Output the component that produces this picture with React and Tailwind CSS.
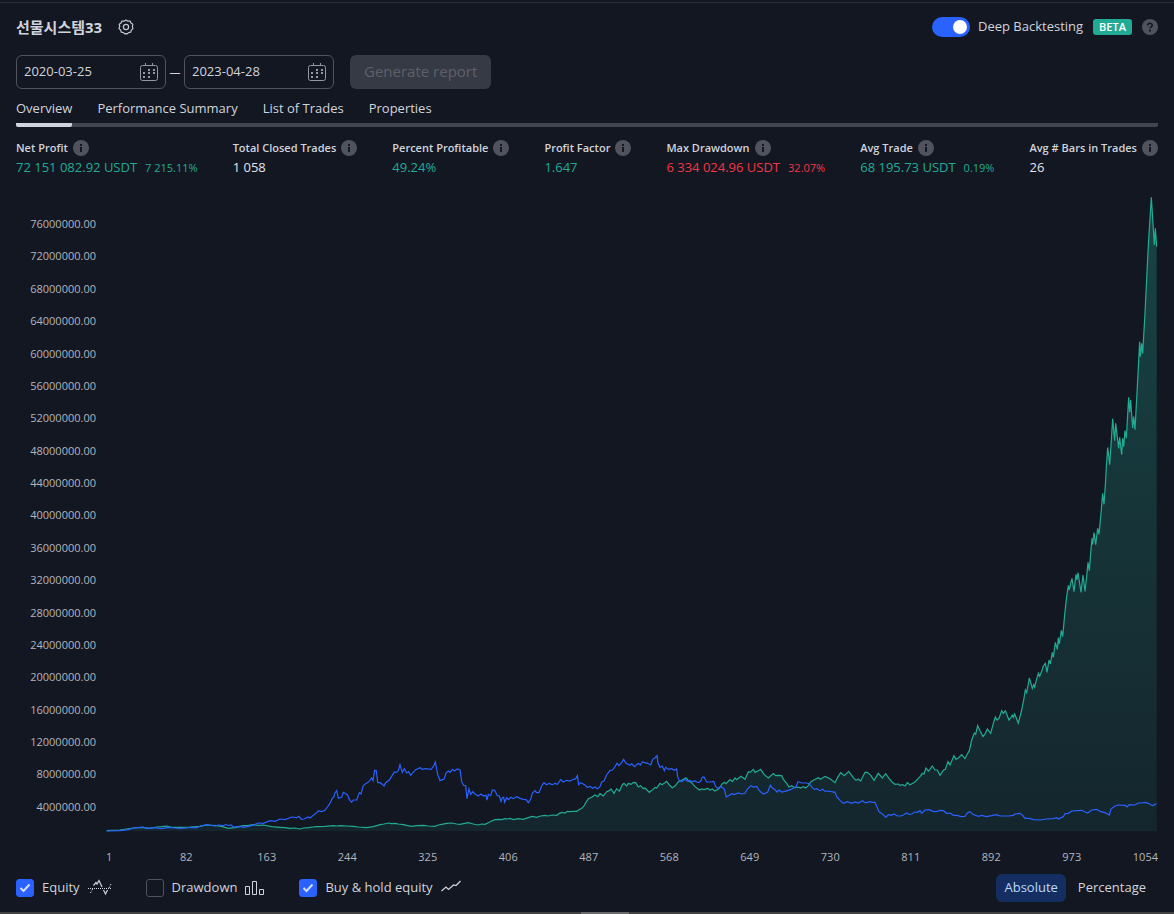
import React, { useState } from 'react';

const EQUITY =
  "20,272 60,270 80,267 100,264 125,262 150,265 170,261 185,260 200,258 215,262 245,262 270,261 300,259 320,255 350,257 365,259 385,265 405,263 430,257 445,256 460,254 475,256 490,255 515,260 540,262 555,263 570,265 585,264 600,267 610,264 625,263 640,261 650,260 675,259 700,257 710,258 720,257 740,258 760,259 775,261 800,263 820,260 " +
  "840,254 852,252 865,249 875,251 885,250 895,252 910,254 920,256 935,259 950,257 970,256 985,258 1005,259 1015,255 1025,253 1040,250 1055,249 1070,252 1080,253 1090,251 1105,248 1120,252 1135,255 1145,252 1155,253 1165,248 1175,243 1185,239 1195,238 1205,239 1215,236 1222,237 1230,235 1240,239 1255,236 1270,238 1285,233 1297,229 1310,232 1322,228 1335,226 1345,228 1355,225 1370,226 1378,220 1385,217 1395,219 1402,214 1410,215 1420,214 1430,214 1437,209 1445,205 1452,198 1458,187 1465,176 1475,172 1485,165 1493,170 1500,161 1510,168 1520,155 1528,152 1533,147 1542,160 1550,146 1558,154 1567,134 1572,130 1580,138 1585,130 1593,133 1600,127 1607,128 1615,141 1622,137 1630,146 " +
  "1635,144 1648,157 1658,149 1665,142 1670,144 1680,130 1686,134 1700,124 1708,135 1717,143 1725,138 1735,125 1745,121 1758,113 1767,124 1775,128 1785,140 1798,150 1805,147 1812,149 1823,145 1830,150 1837,147 1845,153 1857,146 1867,131 1873,127 1878,131 1890,119 1897,125 1905,114 1910,119 1923,109 1935,118 1945,95 1950,97 1960,88 1965,97 1975,92 1982,88 1992,103 2005,114 2020,101 2027,107 2035,106 2045,107 2050,118 2060,130 2067,141 2075,137 2085,143 2095,141 2102,144 2110,140 2117,144 2125,137 2133,125 2140,121 2155,113 2162,118 2175,109 2190,116 2205,128 2213,112 2222,98 2233,107 2246,94 2260,113 2268,121 2275,117 2282,123 2295,97 2302,97 2313,107 2322,121 2335,100 2347,114 2357,101 2367,115 2377,127 2385,133 2395,132 2400,136 2408,134 " +
  "2415,138 2422,128 2430,134 2445,126 2460,110 2467,100 2472,102 2478,84 2485,93 2490,88 2497,78 2505,90 2512,90 2520,106 2530,91 2536,88 2544,65 2550,75 2562,47 2568,58 2575,54 2585,44 2595,56 2602,42 2608,32 2615,0 2623,-21 2627,-17 2633,-43 2640,-28 2649,-10 2656,-20 2662,-33 2672,-20 2680,-50 2686,-69 2691,-60 2697,-65 2705,-88 2710,-80 2716,-88 2727,-60 2732,-66 2737,-75 2740,-68 2744,-78 2755,-50 2765,-90 2771,-120 2776,-150 2780,-142 2788,-186 2797,-155 2801,-166 2804,-159 2808,-176 2815,-200 2819,-191 2824,-203 2830,-222 2836,-230 2841,-203 2847,-240 2851,-228 2857,-263 2860,-248 2866,-293 2872,-272 2875,-307 2878,-288 2884,-329 2888,-310 2895,-385 2900,-430 2905,-464 2908,-450 2912,-470 2916,-485 2922,-445 2928,-497 2931,-480 2934,-502 2943,-443 2949,-495 2955,-446 2960,-490 2964,-533 2968,-508 2972,-560 2976,-605 2978,-587 2982,-622 2987,-586 2993,-635 2997,-617 3003,-680 3008,-740 3012,-707 3017,-780 " +
  "3019,-820 3023,-877 3029,-826 3034,-900 3038,-964 3044,-898 3047,-950 3056,-875 3059,-908 3065,-856 3068,-905 3071,-880 3075,-928 3079,-905 3086,-1028 3089,-983 3092,-1020 3098,-936 3101,-970 3105,-931 3112,-1060 3119,-1195 3121,-1150 3125,-1190 3128,-1159 3135,-1280 3145,-1485 3154,-1628 3163,-1485 3166,-1535 3170,-1480";

const BUY_HOLD =
  "20,273 60,272 85,269 100,264 115,263 130,261 140,266 160,263 185,266 205,262 225,264 240,265 260,264 275,262 290,264 300,258 320,254 345,258 355,255 370,257 378,253 385,257 393,255 400,261 420,259 432,262 455,257 475,249 490,250 510,242 525,244 540,237 555,239 575,231 590,233 597,229 604,238 612,237 625,231 630,234 650,218 655,213 665,215 675,211 680,204 688,193 693,184 696,176 702,170 705,158 710,152 715,175 725,172 730,157 742,164 748,178 755,187 760,180 770,180 778,158 783,162 790,137 797,131 807,125 815,114 819,122 824,91 829,92 833,128 " +
  "840,128 846,132 852,138 857,128 868,120 878,104 883,96 888,98 895,92 900,74 907,97 913,86 920,99 926,95 932,106 947,89 960,83 967,88 975,86 993,88 1000,80 1006,66 1013,103 1020,122 1027,119 1032,118 1038,99 1045,93 1050,97 1057,88 1063,93 1072,87 1080,90 1085,125 1091,136 1097,137 1101,176 1107,147 1112,163 1118,155 1125,162 1135,168 1143,162 1150,168 1158,166 1161,180 1165,163 1172,167 1177,150 1184,151 1192,167 1198,168 1203,184 1207,173 1211,172 1214,187 1220,173 1225,179 1233,172 1240,176 1250,170 1260,175 1270,178 1278,179 1285,188 1292,178 1297,160 1305,152 1310,158 1317,158 1325,138 1332,128 1340,134 1347,130 1357,134 1365,130 1372,133 1382,119 1390,126 1400,121 1410,123 1420,118 1427,116 1432,107 1436,134 1442,128 1455,135 1462,142 1470,139 1478,145 1485,141 1492,146 1500,140 1505,126 1512,123 1520,105 1530,91 1538,90 1545,80 1551,70 1557,77 1565,68 1571,58 1578,70 1590,76 1595,71 1603,80 1615,70 1621,75 1627,66 1635,68 1643,70 " +
  "1652,75 1658,58 1665,54 1671,47 1674,69 1680,82 1687,78 1693,92 1697,82 1705,88 1715,86 1723,91 1730,87 1733,110 1738,122 1745,125 1755,118 1762,123 1770,121 1775,125 1785,123 1795,128 1802,124 1807,112 1812,111 1820,126 1830,126 1841,124 1847,140 1853,145 1863,140 1873,147 1879,171 1888,166 1895,161 1902,164 1915,159 1925,162 1935,160 1942,147 1953,137 1960,141 1970,139 1978,152 1990,162 2003,157 2011,136 2018,145 2025,149 2031,156 2037,150 2045,156 2055,154 2065,151 2073,148 2083,143 2088,140 2094,125 2105,129 2120,129 2128,131 2136,142 2143,148 2150,146 2160,152 2168,148 2175,154 2185,153 2205,157 2210,170 2220,181 2230,190 2242,185 2255,190 2265,186 2275,189 2288,182 2293,187 2300,188 2310,185 2317,187 2325,187 2332,203 2337,215 2348,223 2358,232 2365,224 2373,226 2382,222 2392,228 2402,228 2410,225 2420,219 2427,223 2435,222 2445,216 2452,217 2460,212 " +
  "2465,220 2475,210 2488,209 2498,214 2508,215 2520,211 2530,212 2540,220 2552,220 2560,226 2572,226 2582,230 2595,229 2602,219 2610,215 2618,223 2635,229 2645,226 2660,230 2675,227 2688,224 2700,228 2725,228 2740,226 2745,222 2760,220 2768,226 2775,235 2788,235 2800,239 2820,240 2840,237 2860,236 2870,233 2875,237 2890,230 2895,221 2905,220 2915,213 2945,211 2955,216 2963,219 2975,210 2990,208 3000,214 3015,218 3028,225 3033,207 3045,198 3055,195 3075,196 3081,201 3088,194 3105,195 3115,189 3125,189 3135,187 3145,190 3157,197 3165,194 3169,190";

const yTicks = Array.from({ length: 19 }, (_, i) => `${(19 - i) * 4000000}.00`);
const xTicks = [1, 82, 163, 244, 325, 406, 487, 568, 649, 730, 811, 892, 973, 1054];

const tabs = ["Overview", "Performance Summary", "List of Trades", "Properties"];

const stats = [
  { label: "Net Profit", value: "72 151 082.92 USDT", percent: "7 215.11%", color: "text-[#22ab94]" },
  { label: "Total Closed Trades", value: "1 058", color: "text-[#e0e3eb]" },
  { label: "Percent Profitable", value: "49.24%", color: "text-[#22ab94]" },
  { label: "Profit Factor", value: "1.647", color: "text-[#22ab94]" },
  { label: "Max Drawdown", value: "6 334 024.96 USDT", percent: "32.07%", color: "text-[#f23645]" },
  { label: "Avg Trade", value: "68 195.73 USDT", percent: "0.19%", color: "text-[#22ab94]" },
  { label: "Avg # Bars in Trades", value: "26", color: "text-[#e0e3eb]" },
];

function GearIcon() {
  return (
    <svg width="16" height="16" viewBox="0 0 16 16" fill="none" stroke="#c5c8d0" strokeWidth="1.2" strokeLinejoin="round">
      <path d="M8 1 9.9 2.2 12.1 2 13 4 14.8 5.3 14.3 7.5 15 9.6 13.3 11.1 12.8 13.2 10.6 13.6 8.9 15 8 14.6 7.1 15 5.4 13.6 3.2 13.2 2.7 11.1 1 9.6 1.7 7.5 1.2 5.3 3 4 3.9 2 6.1 2.2Z" />
      <circle cx="8" cy="8" r="2.6" />
    </svg>
  );
}

function CalendarIcon() {
  return (
    <svg width="18" height="18" viewBox="0 0 18 18" fill="none" stroke="#9598a1" className="shrink-0">
      <rect x="0.5" y="2.5" width="17" height="15" rx="2" />
      <path d="M5.5 0v3M12.5 0v3" />
      <path strokeWidth="2" d="M8 7h2M13 7h2M3 10h2M8 10h2M13 10h2M3 14h2M8 14h2" />
    </svg>
  );
}

function InfoIcon() {
  return (
    <svg width="16" height="16" viewBox="0 0 16 16" className="shrink-0">
      <circle cx="8" cy="8" r="8" fill="#50535e" />
      <path fill="#131722" d="M7 4h2v2H7zM7 7h2v5H7z" />
    </svg>
  );
}

function HelpIcon() {
  return (
    <svg width="16" height="16" viewBox="0 0 16 16">
      <circle cx="8" cy="8" r="8" fill="#50535e" />
      <path d="M5.8 6.4C5.8 3.6 10.2 3.7 10.2 6.2 10.2 7.8 8 7.8 8 9.6" fill="none" stroke="#131722" strokeWidth="1.6" />
      <path fill="#131722" d="M7 10.8h2v1.8H7z" />
    </svg>
  );
}

function EquityIcon() {
  return (
    <svg width="24" height="18" viewBox="0 0 24 18" fill="none" stroke="#d1d4dc">
      <path d="M0 9.5h24" strokeDasharray="1 1" />
      <path d="M5.5 6.5 8 3.5 9 5 11 1.5 14 8M15.5 11 17.5 15 19.5 11" strokeWidth="1.2" />
      <path d="M2.5 14 4.5 10M21 9 23 5" strokeDasharray="1.5 1.5" />
    </svg>
  );
}

function BarsIcon() {
  return (
    <svg width="20" height="16" viewBox="0 0 20 16" fill="none" stroke="#d1d4dc">
      <path d="M.5 6.5h4v8h-4zM7.5 1.5h4v13h-4zM14.5 9.5h4v5h-4z" />
    </svg>
  );
}

function LineIcon() {
  return (
    <svg width="20" height="16" viewBox="0 0 20 16" fill="none" stroke="#d1d4dc" strokeWidth="1.2">
      <path d="M.5 11 5 7 7.5 9.5 12.5 5 15 5.5 19.5 1" />
    </svg>
  );
}

function DateField({ label, value }) {
  return (
    <label className="flex h-[34px] w-[150px] items-center rounded-md border border-[#50535e] px-[7px]">
      <input aria-label={label} defaultValue={value} className="w-full min-w-0 bg-transparent text-[13px] text-[#d1d4dc] outline-none" />
      <CalendarIcon />
    </label>
  );
}

function Check({ label, checked, onChange, children }) {
  return (
    <label className="flex items-center gap-2 text-[13px]">
      <span className="grid size-[18px] place-items-center">
        <input
          type="checkbox"
          checked={checked}
          onChange={onChange}
          className="peer col-start-1 row-start-1 size-[18px] appearance-none rounded-[3px] border border-[#50535e] checked:border-[#2962ff] checked:bg-[#2962ff]"
        />
        <svg width="12" height="10" viewBox="0 0 12 10" className="pointer-events-none col-start-1 row-start-1 hidden peer-checked:block" fill="none" stroke="#d1dcff" strokeWidth="2">
          <path d="M1.5 5 4.5 8 10.5 1.5" />
        </svg>
      </span>
      {label}
      {children}
    </label>
  );
}

function App() {
  const [deep, setDeep] = useState(true);
  const [tab, setTab] = useState("Overview");
  const [mode, setMode] = useState("Absolute");
  const [show, setShow] = useState({ equity: true, drawdown: false, hold: true });

  const toggle = (key) => setShow((prev) => ({ ...prev, [key]: !prev[key] }));

  return (
    <div className="bg-[#131722] pt-[2px] font-['Open_Sans','Noto_Sans_CJK_KR',sans-serif] text-[#d1d4dc]">
      <div className="border-t border-[#2a2e39] px-4 pt-3">

        {/* Header */}
        <header className="flex h-6 items-center justify-between">
          <div className="flex items-center gap-4">
            <h1 className="text-[15px] font-bold">선물시스템33</h1>
            <button aria-label="Settings"><GearIcon /></button>
          </div>
          <div className="flex items-center gap-[10px]">
            <label className="flex items-center gap-2 text-[13px]">
              <span className="grid items-center">
                <input
                  type="checkbox"
                  role="switch"
                  checked={deep}
                  onChange={() => setDeep(!deep)}
                  className="peer col-start-1 row-start-1 h-5 w-[38px] appearance-none rounded-full bg-[#50535e] checked:bg-[#2962ff]"
                />
                <span className="pointer-events-none col-start-1 row-start-1 ml-[3px] size-[14px] rounded-full bg-white peer-checked:ml-[21px]" />
              </span>
              Deep Backtesting
            </label>
            <span className="h-4 rounded-[3px] bg-[#22ab94] px-[6px] text-[11px] leading-4 font-semibold text-white">BETA</span>
            <button aria-label="Help"><HelpIcon /></button>
          </div>
        </header>

        {/* Date range */}
        <div className="mt-4 flex items-center">
          <DateField label="From" value="2020-03-25" />
          <span className="w-[18px] text-center text-[11px]">—</span>
          <DateField label="To" value="2023-04-28" />
          <button disabled className="ml-4 h-[34px] rounded-md bg-[#363a45] px-[14px] pb-[2px] text-[15px] text-[#5d606b]">Generate report</button>
        </div>

        {/* Tabs */}
        <nav className="mt-[10px] flex gap-[25px] rounded-b-[2px] border-b-4 border-[#434651]">
          {tabs.map((name) => (
            <button
              key={name}
              onClick={() => setTab(name)}
              className={`-mb-1 h-7 border-b-4 pb-[5px] text-[13px] leading-[19px] ${tab === name ? "rounded-[2px] border-[#d1d4dc]" : "border-transparent"}`}
            >
              {name}
            </button>
          ))}
        </nav>

        {/* Stats */}
        <dl className="mt-3 flex justify-between">
          {stats.map((s) => (
            <div key={s.label} className="whitespace-nowrap">
              <dt className="flex h-[18px] items-center gap-[5px] text-[11px] font-semibold">{s.label} <InfoIcon /></dt>
              <dd className={`flex items-baseline gap-2 text-[13px] leading-5 ${s.color}`}>
                {s.value}
                {s.percent && <span className="text-[11px]">{s.percent}</span>}
              </dd>
            </div>
          ))}
        </dl>

        {/* Chart */}
        <div className="mt-[14px] flex">
          <div className="flex w-[90px] flex-col justify-between pt-6 pr-[10px] pb-[17px] text-right text-[11px] leading-4 text-[#b2b5be]">
            {yTicks.map((t) => <span key={t}>{t}</span>)}
          </div>
          <svg className="h-[640px] min-w-0 flex-1" viewBox="18 -1644 3156 1920" preserveAspectRatio="none" fill="none">
            <defs>
              <linearGradient id="equityFill" x1="0" y1="0" x2="0" y2="1">
                <stop offset="0" stopColor="#22ab94" stopOpacity="0.3" />
                <stop offset="1" stopColor="#22ab94" stopOpacity="0.1" />
              </linearGradient>
            </defs>
            {show.equity && (
              <>
                <polygon points={`20,273 ${EQUITY} 3170,273`} fill="url(#equityFill)" />
                <polyline points={EQUITY} stroke="#22ab94" strokeWidth="1.2" vectorEffect="non-scaling-stroke" />
              </>
            )}
            {show.hold && <polyline points={BUY_HOLD} stroke="#2962ff" strokeWidth="1.2" vectorEffect="non-scaling-stroke" />}
          </svg>
        </div>
        <div className="mt-4 ml-[90px] flex text-[11px] leading-[18px] text-[#b2b5be]">
          {xTicks.map((t) => (
            <span key={t} className="flex-1 text-center first:w-10 first:flex-none first:text-left last:w-[46px] last:flex-none last:text-right">{t}</span>
          ))}
        </div>

        {/* Legend */}
        <footer className="mt-2 flex h-7 items-center justify-between">
          <div className="flex items-center gap-[34px]">
            <Check label="Equity" checked={show.equity} onChange={() => toggle("equity")}><EquityIcon /></Check>
            <Check label="Drawdown" checked={show.drawdown} onChange={() => toggle("drawdown")}><BarsIcon /></Check>
            <Check label="Buy & hold equity" checked={show.hold} onChange={() => toggle("hold")}><LineIcon /></Check>
          </div>
          <div className="flex gap-1 pr-1">
            {["Absolute", "Percentage"].map((m) => (
              <button
                key={m}
                onClick={() => setMode(m)}
                className={`h-7 rounded-md px-2 text-[13px] ${mode === m ? "bg-[#142e61] text-[#bbd9fb]" : ""}`}
              >
                {m}
              </button>
            ))}
          </div>
        </footer>
      </div>
      <div className="mt-[10px] h-[2px] bg-[#434242] pl-9">
        <div className="mx-auto h-[2px] w-12 bg-[#6a6a6c]" />
      </div>
    </div>
  );
}

export default App;
